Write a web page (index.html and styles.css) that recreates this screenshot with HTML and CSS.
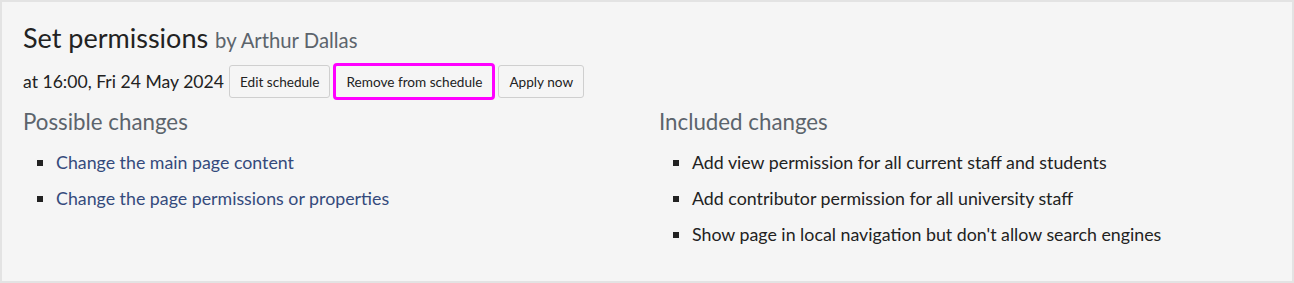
FILE: index.html
```html
<!DOCTYPE html>
<html lang="en">
<head>
<meta charset="utf-8">
<title>Set permissions</title>
<link rel="stylesheet" href="styles.css">
</head>
<body>
<div class="panel">
  <h1 class="title">Set permissions <span class="by">by Arthur Dallas</span></h1>
  <div class="when">
    <span class="when-text">at 16:00, Fri 24 May 2024</span>
    <button class="btn">Edit schedule</button>
    <button class="btn btn-focus">Remove from schedule</button>
    <button class="btn">Apply now</button>
  </div>
  <div class="columns">
    <section class="col">
      <h2 class="col-title">Possible changes</h2>
      <ul class="list">
        <li><a href="#">Change the main page content</a></li>
        <li><a href="#">Change the page permissions or properties</a></li>
      </ul>
    </section>
    <section class="col">
      <h2 class="col-title">Included changes</h2>
      <ul class="list">
        <li>Add view permission for all current staff and students</li>
        <li>Add contributor permission for all university staff</li>
        <li>Show page in local navigation but don't allow search engines</li>
      </ul>
    </section>
  </div>
</div>
</body>
</html>
```

FILE: styles.css
```css
* { box-sizing: border-box; }
html, body { margin: 0; padding: 0; }
body {
  font-family: Lato, "Liberation Sans", sans-serif;
  color: #222;
  background: #fff;
  width: 1294px;
  height: 283px;
}
.panel {
  width: 1294px;
  height: 283px;
  background: #f5f5f5;
  border: 2px solid #e3e3e3;
  padding: 20px 21px 0 21px;
}
.title {
  margin: 0;
  font-size: 27px;
  font-weight: 400;
  line-height: 32px;
  color: #222;
}
.by {
  font-size: 20.3px;
  color: #5c646c;
}
.when {
  display: flex;
  align-items: center;
  margin-top: 7px;
  height: 37px;
}
.when-text {
  font-size: 17.6px;
  margin-right: 5px;
}
.btn {
  font-family: Lato, "Liberation Sans", sans-serif;
  font-size: 13.6px;
  color: #222;
  background: #f5f5f5;
  border: 1px solid #cfcfcf;
  border-radius: 3px;
  height: 33px;
  padding: 0 10px;
  margin-right: 3px;
}
.btn-focus {
  border: 3px solid #f0f;
  border-radius: 4px;
  height: 37px;
  padding: 0 10px;
}
.columns {
  display: grid;
  grid-template-columns: 1fr 1fr;
  column-gap: 24px;
  margin-top: 7px;
}
.col-title {
  margin: 0;
  font-size: 22.3px;
  font-weight: 400;
  line-height: 30px;
  color: #5c646c;
}
.list {
  margin: 13px 0 0 0;
  padding: 0 0 0 33px;
  list-style: square;
}
.list li {
  font-size: 17.8px;
  line-height: 24px;
  margin-bottom: 12px;
}
.list a {
  color: #344a7c;
  text-decoration: none;
}
```
